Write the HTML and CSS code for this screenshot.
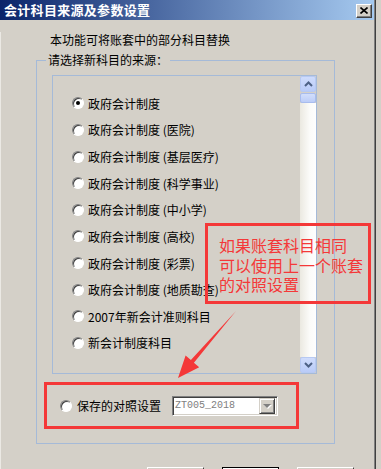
FILE: index.html
```html
<!DOCTYPE html>
<html lang="zh-CN">
<head>
    <meta charset="UTF-8">
    <title>会计科目来源及参数设置</title>
    <link rel="stylesheet" href="styles.css">
</head>
<body>
    <div class="window">
        <div class="titlebar">
            <span class="title">会计科目来源及参数设置</span>
            <span class="close-btn">
                <svg width="8" height="7" viewBox="0 0 8 7"><path d="M0.5 0.5 L7.5 6.5 M7.5 0.5 L0.5 6.5" stroke="#000" stroke-width="1.6"/></svg>
            </span>
        </div>

        <div class="content">
            <p class="intro">本功能可将账套中的部分科目替换</p>

            <fieldset class="group">
                <legend>请选择新科目的来源：</legend>
                <div class="listbox">
                    <ul class="options">
                        <li><span class="radio checked"></span>政府会计制度</li>
                        <li><span class="radio"></span>政府会计制度 (医院)</li>
                        <li><span class="radio"></span>政府会计制度 (基层医疗)</li>
                        <li><span class="radio"></span>政府会计制度 (科学事业)</li>
                        <li><span class="radio"></span>政府会计制度 (中小学)</li>
                        <li><span class="radio"></span>政府会计制度 (高校)</li>
                        <li><span class="radio"></span>政府会计制度 (彩票)</li>
                        <li><span class="radio"></span>政府会计制度 (地质勘查)</li>
                        <li><span class="radio"></span>2007年新会计准则科目</li>
                        <li><span class="radio"></span>新会计制度科目</li>
                    </ul>
                    <div class="scrollbar">
                        <span class="sb-btn">
                            <svg width="9" height="6" viewBox="0 0 9 6"><path d="M1 5 L4.5 1.5 L8 5" fill="none" stroke="#4d6185" stroke-width="2"/></svg>
                        </span>
                        <span class="sb-thumb"></span>
                        <span class="sb-track"></span>
                        <span class="sb-btn">
                            <svg width="9" height="6" viewBox="0 0 9 6"><path d="M1 1 L4.5 4.5 L8 1" fill="none" stroke="#4d6185" stroke-width="2"/></svg>
                        </span>
                    </div>
                </div>

                <div class="saved mark">
                    <span class="radio"></span>
                    <span class="saved-label">保存的对照设置</span>
                    <div class="combo">
                        <span class="combo-text">ZT005_2018</span>
                        <span class="combo-btn"><span class="tri"></span></span>
                    </div>
                </div>
            </fieldset>

            <div class="buttons">
                <span class="btn"></span>
                <span class="btn default"></span>
                <span class="btn"></span>
            </div>
        </div>

        <!-- 标注 -->
        <div class="note">如果账套科目相同<br>可以使用上一个账套<br>的对照设置</div>
        <svg class="arrow" width="381" height="469" viewBox="0 0 381 469">
            <polygon points="236,311 193.9,362.7 199.2,367.3 178,378 185.6,355.5 190.9,360.1" fill="#f43838"/>
        </svg>
    </div>
</body>
</html>
```

FILE: styles.css
```css
html, body { margin: 0; padding: 0; background: #d4d0c8; }
body { width: 381px; height: 469px; overflow: hidden; font-family: "Noto Sans CJK SC", sans-serif; font-size: 12px; color: #000; }

.window { position: relative; width: 375px; height: 469px; border-right: 1px solid #404040; box-shadow: inset -1px 0 0 #808080; overflow: hidden; }

.titlebar { display: flex; align-items: center; justify-content: space-between; height: 20px; margin-right: 1px; padding: 0 2px 0 4px; background: linear-gradient(to right, #0a246a, #a6caf0); }
.title { color: #fff; font-weight: bold; font-size: 13px; line-height: 20px; letter-spacing: 0.3px; }
.close-btn { display: flex; align-items: center; justify-content: center; box-sizing: border-box; width: 16px; height: 14px; margin-top: 1px; background: #d4d0c8; border: 1px solid; border-color: #fff #404040 #404040 #fff; box-shadow: inset -1px -1px 0 #808080; }

.content { padding-left: 35px; border-left: 1px solid #ebe9e4; }
.intro { margin: 12px 0 0 14px; line-height: 16px; }

.group { box-sizing: border-box; width: 299px; margin: 4px 0 0 0; padding: 7px 0 14px 9px; border: 1px solid #a5bad8; }
.group legend { padding: 0 2px; line-height: 16px; }

.listbox { display: flex; box-sizing: border-box; width: 265px; height: 299px; margin-left: 6px; border: 1px solid #a5bad8; }
.options { flex: 1; list-style: none; margin: 0; padding: 14px 0 0 0; }
.options li { display: flex; align-items: center; gap: 4px; height: 26.64px; padding-left: 19px; white-space: nowrap; }

.radio { box-sizing: border-box; flex: none; display: inline-flex; align-items: center; justify-content: center; width: 12px; height: 12px; border-radius: 50%; background: #fff; border: 1px solid; border-color: #808080 #fff #fff #808080; box-shadow: inset 1px 1px 0 #404040; }
.radio.checked::after { content: ""; width: 4px; height: 4px; border-radius: 50%; background: #000; }

.scrollbar { display: flex; flex-direction: column; width: 16px; }
.sb-btn { display: flex; align-items: center; justify-content: center; box-sizing: border-box; height: 16px; border: 1px solid #b7c9f2; border-radius: 2px; background: linear-gradient(#cfdcfc, #b9cbf8); }
.sb-thumb { box-sizing: border-box; height: 10px; margin-top: 1px; border: 1px solid #a8bcee; border-radius: 2px; background: linear-gradient(#d2defc, #bccdf8); }
.sb-track { flex: 1; background: linear-gradient(to right, #ebe9e1, #fbfbf9 60%, #fefefe); }

.mark { border: 3px solid #f43838; }
.saved { display: flex; align-items: center; box-sizing: border-box; width: 255px; height: 47px; margin: 8px 0 0 -2px; padding-left: 13px; }
.saved-label { margin-left: 5px; }
.combo { display: flex; align-items: center; box-sizing: border-box; width: 106px; height: 20px; margin-left: 11px; background: #fff; border: 1px solid; border-color: #808080 #fff #fff #808080; box-shadow: inset 1px 1px 0 #404040, inset -1px -1px 0 #d4d0c8; }
.combo-text { flex: 1; padding-left: 2px; font-family: "Liberation Mono", monospace; font-size: 10px; color: #808080; }
.combo-btn { display: flex; align-items: center; justify-content: center; box-sizing: border-box; width: 16px; height: 16px; margin-right: 2px; background: #d4d0c8; border: 1px solid; border-color: #d4d0c8 #404040 #404040 #d4d0c8; box-shadow: inset 1px 1px 0 #fff, inset -1px -1px 0 #808080; }
.tri { width: 0; height: 0; border-left: 4px solid transparent; border-right: 4px solid transparent; border-top: 4px solid #808080; filter: drop-shadow(1px 1px 0 #fff); }

.buttons { display: flex; gap: 18px; margin: 23px 0 0 111px; }
.btn { box-sizing: border-box; width: 57px; height: 23px; background: #d4d0c8; border: 1px solid; border-color: #fff #404040 #404040 #fff; }
.btn.default { border: 1px solid #000; box-shadow: inset 1px 1px 0 #fff; }

.note { position: absolute; left: 205px; top: 223px; box-sizing: border-box; width: 166px; height: 81px; padding: 10px 0 0 11px; border: 3px solid #f43838; color: #f43838; font-size: 16px; line-height: 19.5px; white-space: nowrap; }
.arrow { position: absolute; left: 0; top: 0; pointer-events: none; }
```
